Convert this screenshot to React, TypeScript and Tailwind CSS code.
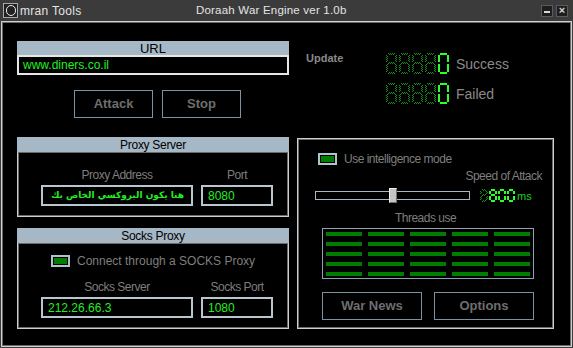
import { useId } from "react";

const SEGS: Record<string, string> = { "0": "abcdef", "8": "abcdefg" };

function Digit({ ch, lit, w = 11, h = 21, t = 2 }: { ch: string; lit: boolean; w?: number; h?: number; t?: number }) {
  const id = useId();
  const m = Math.floor(h / 2);
  const rects: Record<string, [number, number, number, number]> = {
    a: [t, 0, w - 2 * t, t],
    b: [w - t, t, t, m - t - 1],
    c: [w - t, m + 1, t, h - t - m - 1],
    d: [t, h - t, w - 2 * t, t],
    e: [0, m + 1, t, h - t - m - 1],
    f: [0, t, t, m - t - 1],
    g: [t, m - 1, w - 2 * t, t],
  };
  const on = lit ? SEGS[ch] : "abcdefg";
  return (
    <svg width={w} height={h} viewBox={`0 0 ${w} ${h}`} className="block shrink-0">
      <defs>
        <pattern id={id} width="2" height="2" patternUnits="userSpaceOnUse">
          <rect width="1" height="1" fill="#14901a" />
          <rect x="1" y="1" width="1" height="1" fill="#14901a" />
        </pattern>
      </defs>
      {on.split("").map((s) => {
        const [x, y, rw, rh] = rects[s];
        return <rect key={s} x={x} y={y} width={rw} height={rh} fill={lit ? "#2cff2c" : `url(#${id})`} />;
      })}
    </svg>
  );
}

function Counter({ label }: { label: string }) {
  return (
    <div className="flex items-center h-[21px]">
      <div className="flex gap-[2px]">
        {[0, 1, 2, 3].map((i) => (
          <Digit key={i} ch="8" lit={false} />
        ))}
        <Digit ch="0" lit />
      </div>
      <span className="ml-[7px] text-[14px] text-[#8a8a8a] leading-none">{label}</span>
    </div>
  );
}

function Header({ title }: { title: string }) {
  return (
    <div className="h-[15px] bg-[#a6b8c6] flex items-center justify-center text-[12px] text-black leading-none tracking-[-0.3px]">
      {title}
    </div>
  );
}

function Field({ value, className = "", rtl = false }: { value: string; className?: string; rtl?: boolean }) {
  return (
    <div
      dir={rtl ? "rtl" : "ltr"}
      className={`h-[21px] border-2 border-[#b8c6cf] bg-black flex items-center text-[12px] text-[#22ee22] leading-none whitespace-nowrap overflow-hidden ${
        rtl ? "pr-[7px] font-bold" : "pl-[5px]"
      } ${className}`}
      style={rtl ? { fontFamily: '"DejaVu Sans", "Noto Sans", sans-serif', fontSize: "9px" } : undefined}
    >
      {value}
    </div>
  );
}

function Check() {
  return (
    <div className="w-[19px] h-[12px] border-2 border-[#b0c2cc] bg-black p-[1px] shrink-0">
      <div className="w-full h-full bg-[#007c00]" />
    </div>
  );
}

function Btn({ label, w }: { label: string; w: string }) {
  return (
    <div className={`${w} h-[28px] border border-[#7a92a2] bg-black flex items-center justify-center text-[13px] font-bold text-[#6e6e6e]`}>
      {label}
    </div>
  );
}

const frame = "border border-[#cfcfcf] shadow-[inset_0_0_0_1px_#6a6a6a]";
const label = "text-[12px] text-[#7e7e7e] leading-none tracking-[-0.5px]";

export default function App() {
  return (
    <div
      className="w-[573px] h-[348px] bg-[#3b3b3b] flex flex-col overflow-hidden"
      style={{ fontFamily: '"Liberation Sans", Arial, sans-serif' }}
    >
      {/* Title bar */}
      <div className="h-[21px] flex items-center text-[#e4e4e4]">
        <div className="ml-[3px] w-[15px] h-[15px] border border-[#a8a8a8] bg-[#222] flex items-center justify-center">
          <div className="w-[10px] h-[11px] rounded-full border-[1.5px] border-[#e8e8e8]" />
        </div>
        <span className="ml-[2px] text-[12px] tracking-[0.3px]">mran Tools</span>
        <span className="flex-1 text-center text-[11.5px] tracking-[0.2px] pr-[80px]">Doraah War Engine ver 1.0b</span>
        <div className="flex gap-[3px] mr-[5px]">
          <div className="w-[12px] h-[12px] bg-[#1e1e1e] border border-[#5a5a5a] flex items-end justify-center pb-[3px]">
            <div className="w-[6px] h-[2px] bg-[#d8d8d8]" />
          </div>
          <div className="w-[12px] h-[12px] bg-[#1e1e1e] border border-[#5a5a5a] flex items-center justify-center text-[11px] font-bold text-[#d8d8d8] leading-none">
            ×
          </div>
        </div>
      </div>

      {/* Main window */}
      <div className={`flex-1 mx-[1px] mb-[1px] bg-black ${frame}`}>
        <div className="flex pl-[15px] pt-[19px] gap-[8px]">
          {/* Left column */}
          <div className="w-[272px] flex flex-col">
            <div className="h-[14px] bg-[#a6b8c6] flex items-center justify-center text-[13px] text-black leading-none">URL</div>
            <div className="h-[20px] border-2 border-[#e6e6e6] bg-black flex items-center pl-[4px] text-[12px] text-[#22ee22]">
              www.diners.co.il
            </div>
            <div className="flex gap-[9px] pl-[57px] mt-[15px]">
              <Btn label="Attack" w="w-[79px]" />
              <Btn label="Stop" w="w-[79px]" />
            </div>

            {/* Proxy Server */}
            <div className="mt-[19px] h-[80px] flex flex-col">
              <Header title="Proxy Server" />
              <div className={`flex-1 ${frame} border-t-0 flex gap-[8px] pl-[23px] pt-[17px]`}>
                <div className="w-[152px] flex flex-col items-center">
                  <span className={label}>Proxy Address</span>
                  <Field value="هنا يكون البروكسي الخاص بك" className="w-full mt-[4px]" rtl />
                </div>
                <div className="w-[72px] flex flex-col items-center">
                  <span className={label}>Port</span>
                  <Field value="8080" className="w-full mt-[4px]" />
                </div>
              </div>
            </div>

            {/* Socks Proxy */}
            <div className="mt-[11px] h-[101px] flex flex-col">
              <Header title="Socks Proxy" />
              <div className={`flex-1 ${frame} border-t-0 flex flex-col pt-[12px]`}>
                <div className="flex items-center pl-[33px]">
                  <Check />
                  <span className="ml-[7px] text-[12px] text-[#7e7e7e] leading-none">Connect through a SOCKS Proxy</span>
                </div>
                <div className="flex gap-[8px] pl-[23px] mt-[14px]">
                  <div className="w-[152px] flex flex-col items-center">
                    <span className={label}>Socks Server</span>
                    <Field value="212.26.66.3" className="w-full mt-[4px]" />
                  </div>
                  <div className="w-[72px] flex flex-col items-center">
                    <span className={label}>Socks Port</span>
                    <Field value="1080" className="w-full mt-[4px]" />
                  </div>
                </div>
              </div>
            </div>
          </div>

          {/* Right column */}
          <div className="w-[257px] flex flex-col">
            <div className="h-[97px] flex pl-[9px] pt-[11px]">
              <span className="w-[80px] text-[11px] font-bold text-[#8a8a8a] leading-none pt-[1px]">Update</span>
              <div className="flex flex-col gap-[9px] pt-[1px]">
                <Counter label="Success" />
                <Counter label="Failed" />
              </div>
            </div>

            <div className={`h-[191px] ${frame} flex flex-col`}>
              <div className="flex items-center pl-[20px] pt-[14px]">
                <Check />
                <span className={`ml-[7px] ${label}`}>Use intelligence mode</span>
              </div>
              <div className={`self-end pr-[11px] mt-[5px] ${label}`}>Speed of Attack</div>
              <div className="flex items-center pl-[17px] mt-[6px] h-[15px]">
                <div className="w-[155px] h-[9px] border border-[#a6b8c4] bg-black flex items-center">
                  <div className="ml-[73px] w-[8px] h-[15px] bg-[#c4c4c4] border-t border-l border-[#f0f0f0] border-r-[#707070] border-b-[#707070] border-r border-b" />
                </div>
                <div className="ml-[10px] flex gap-[1px]">
                  <Digit ch="8" lit={false} w={8} h={13} t={2} />
                  <Digit ch="8" lit w={8} h={13} t={2} />
                  <Digit ch="0" lit w={8} h={13} t={2} />
                  <Digit ch="0" lit w={8} h={13} t={2} />
                </div>
                <span className="ml-[2px] mt-[2px] text-[11px] text-[#1ecc1e] leading-none">ms</span>
              </div>
              <div className={`text-center mt-[9px] ${label}`}>Threads use</div>
              <div className="ml-[24px] mt-[4px] w-[212px] h-[51px] border border-[#8ea4b2] flex flex-col gap-[6px] pl-[3px] pt-[3px]">
                {[0, 1, 2, 3, 4].map((r) => (
                  <div key={r} className="flex gap-[6px]">
                    {[0, 1, 2, 3, 4].map((c) => (
                      <div key={c} className="w-[36px] h-[4px] bg-[#007c00]" />
                    ))}
                  </div>
                ))}
              </div>
              <div className="flex gap-[12px] ml-[24px] mt-[13px]">
                <Btn label="War News" w="w-[100px]" />
                <Btn label="Options" w="w-[100px]" />
              </div>
            </div>
          </div>
        </div>
      </div>
    </div>
  );
}
